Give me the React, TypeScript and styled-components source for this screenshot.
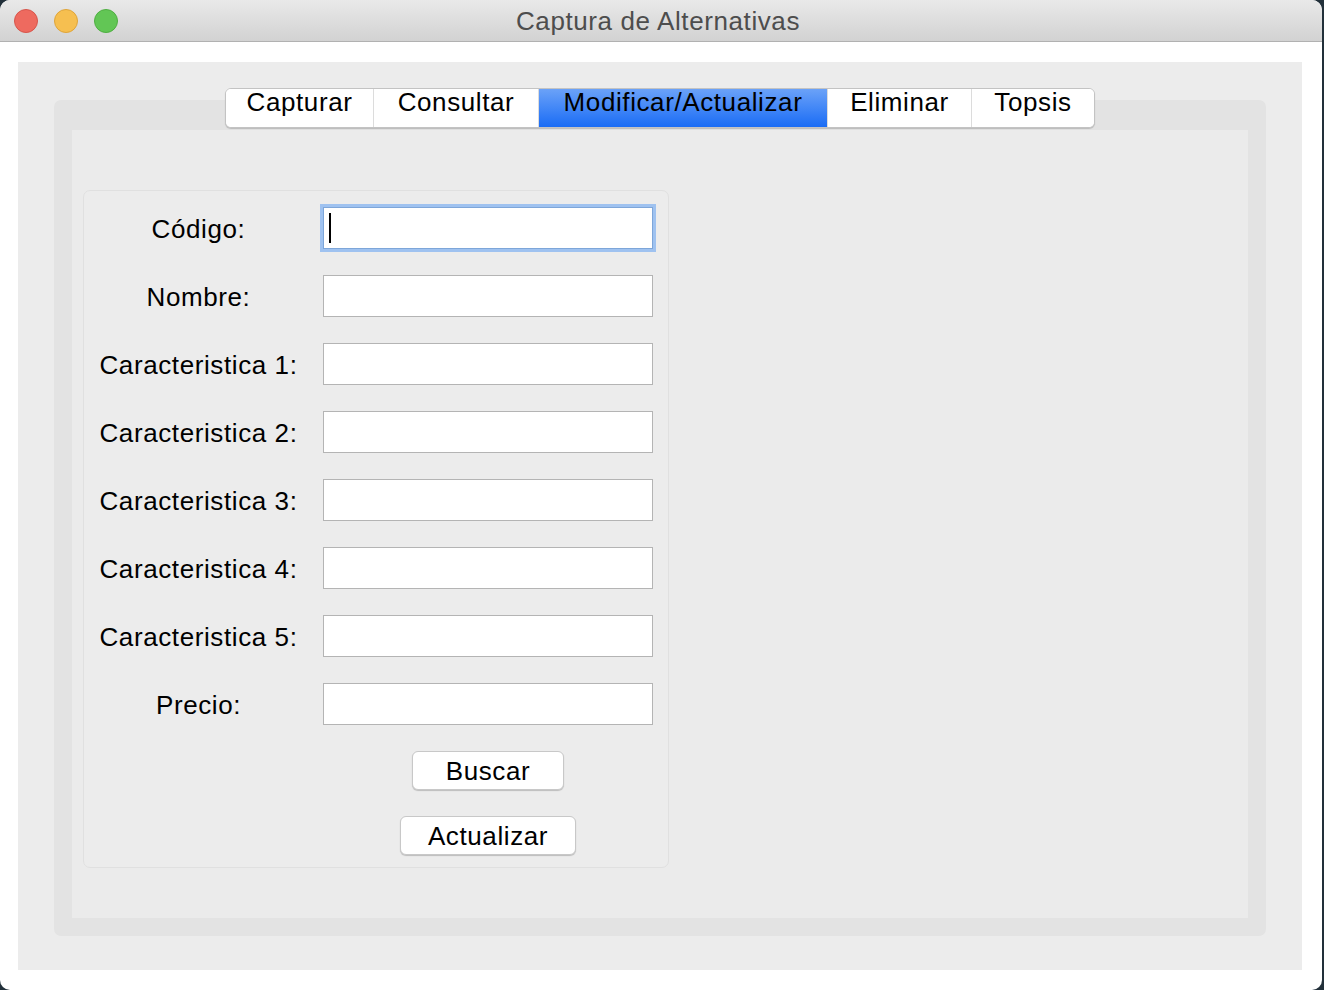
import React from "react";
import styled, { createGlobalStyle } from "styled-components";

const Global = createGlobalStyle`
  html, body { margin: 0; padding: 0; background: #22303a; }
  body { font-family: "Liberation Sans", Arial, sans-serif; }
  * { box-sizing: border-box; }
`;

const Window = styled.div`
  width: 1322px;
  height: 990px;
  display: flex;
  flex-direction: column;
  background: #ffffff;
  border-radius: 10px;
  overflow: hidden;
`;

const TitleBar = styled.div`
  height: 42px;
  flex: 0 0 42px;
  display: flex;
  align-items: center;
  padding-left: 14px;
  background: linear-gradient(#e9e9e9, #d2d2d2);
  border-bottom: 1px solid #b1b1b1;
  position: relative;
`;

const Light = styled.span<{ $bg: string; $bd: string }>`
  width: 24px;
  height: 24px;
  border-radius: 50%;
  background: ${(p) => p.$bg};
  border: 1px solid ${(p) => p.$bd};
  margin-right: 16px;
  flex: 0 0 auto;
`;

const Title = styled.div`
  position: absolute;
  inset: 0;
  display: flex;
  align-items: center;
  justify-content: center;
  padding-top: 1px;
  padding-right: 6px;
  font-size: 26px;
  letter-spacing: 0.6px;
  color: #4d4d4d;
  pointer-events: none;
`;

const Content = styled.div`
  flex: 1;
  padding: 20px 20px 20px 18px;
  display: flex;
`;

const Panel = styled.div`
  flex: 1;
  background: #ececec;
  padding: 26px 36px 34px 36px;
  display: flex;
  flex-direction: column;
`;

const TabBar = styled.div`
  position: relative;
  z-index: 2;
  align-self: center;
  display: flex;
  height: 40px;
  background: #ffffff;
  border: 1px solid #c3c3c3;
  border-radius: 6px;
  box-shadow: 0 1px 1px rgba(0, 0, 0, 0.18);
  overflow: hidden;
`;

const Tab = styled.div<{ $w: number; $active?: boolean }>`
  width: ${(p) => p.$w}px;
  display: flex;
  justify-content: center;
  align-items: flex-start;
  line-height: 26px;
  font-size: 26px;
  letter-spacing: 0.6px;
  color: #000;
  border-left: 1px solid #dcdcdc;
  background: ${(p) => (p.$active ? "linear-gradient(#6ba2f8, #1a6cf5)" : "#ffffff")};
  &:first-child { border-left: none; }
`;

const Pane = styled.div`
  flex: 1;
  margin-top: -28px;
  background: #e3e3e3;
  border-radius: 7px;
  padding: 30px 18px 18px 18px;
  display: flex;
`;

const Inner = styled.div`
  flex: 1;
  background: #ebebeb;
  padding: 60px 0 0 11px;
  display: flex;
  align-items: flex-start;
`;

const Group = styled.div`
  width: 586px;
  display: grid;
  grid-template-columns: 229px 330px;
  column-gap: 10px;
  row-gap: 26px;
  padding: 16px 16px 12px 0;
  border: 1px solid #e0e0e0;
  border-radius: 7px;
  background: #ececec;
`;

const Label = styled.label`
  display: flex;
  align-items: center;
  justify-content: center;
  font-size: 26px;
  letter-spacing: 0.6px;
  color: #000;
  height: 42px;
  padding-top: 2px;
  white-space: nowrap;
`;

const Field = styled.div<{ $focus?: boolean }>`
  height: 42px;
  background: #fff;
  border: 1px solid ${(p) => (p.$focus ? "#7ea6d9" : "#b4b4b4")};
  box-shadow: ${(p) => (p.$focus ? "0 0 0 3px #9fc2f0" : "none")};
  display: flex;
  align-items: center;
  padding-left: 5px;
`;

const Caret = styled.span`
  width: 2px;
  height: 30px;
  background: #000;
`;

const Button = styled.button<{ $w: number }>`
  grid-column: 2;
  justify-self: center;
  width: ${(p) => p.$w}px;
  height: 39px;
  background: #fff;
  border: 1px solid #c8c8c8;
  border-radius: 6px;
  box-shadow: 0 1px 1px rgba(0, 0, 0, 0.2);
  font-family: "Liberation Sans", Arial, sans-serif;
  font-size: 26px;
  letter-spacing: 0.6px;
  color: #000;
  padding: 0;
  line-height: 1;
`;

const labels = [
  "Código:",
  "Nombre:",
  "Caracteristica 1:",
  "Caracteristica 2:",
  "Caracteristica 3:",
  "Caracteristica 4:",
  "Caracteristica 5:",
  "Precio:",
];

const tabs: { name: string; w: number; active?: boolean }[] = [
  { name: "Capturar", w: 147 },
  { name: "Consultar", w: 165 },
  { name: "Modificar/Actualizar", w: 289, active: true },
  { name: "Eliminar", w: 144 },
  { name: "Topsis", w: 123 },
];

export default function App() {
  return (
    <>
      <Global />
      <Window>
        <TitleBar>
          <Light $bg="#ee6a5f" $bd="#d6554b" />
          <Light $bg="#f6bf50" $bd="#dea43a" />
          <Light $bg="#62c655" $bd="#4fae42" />
          <Title>Captura de Alternativas</Title>
        </TitleBar>
        <Content>
          <Panel>
            <TabBar>
              {tabs.map((t) => (
                <Tab key={t.name} $w={t.w} $active={t.active}>
                  {t.name}
                </Tab>
              ))}
            </TabBar>
            <Pane>
              <Inner>
                <Group>
                  {labels.map((l, i) => (
                    <React.Fragment key={l}>
                      <Label>{l}</Label>
                      <Field $focus={i === 0}>{i === 0 && <Caret />}</Field>
                    </React.Fragment>
                  ))}
                  <Button $w={152}>Buscar</Button>
                  <Button $w={176}>Actualizar</Button>
                </Group>
              </Inner>
            </Pane>
          </Panel>
        </Content>
      </Window>
    </>
  );
}
